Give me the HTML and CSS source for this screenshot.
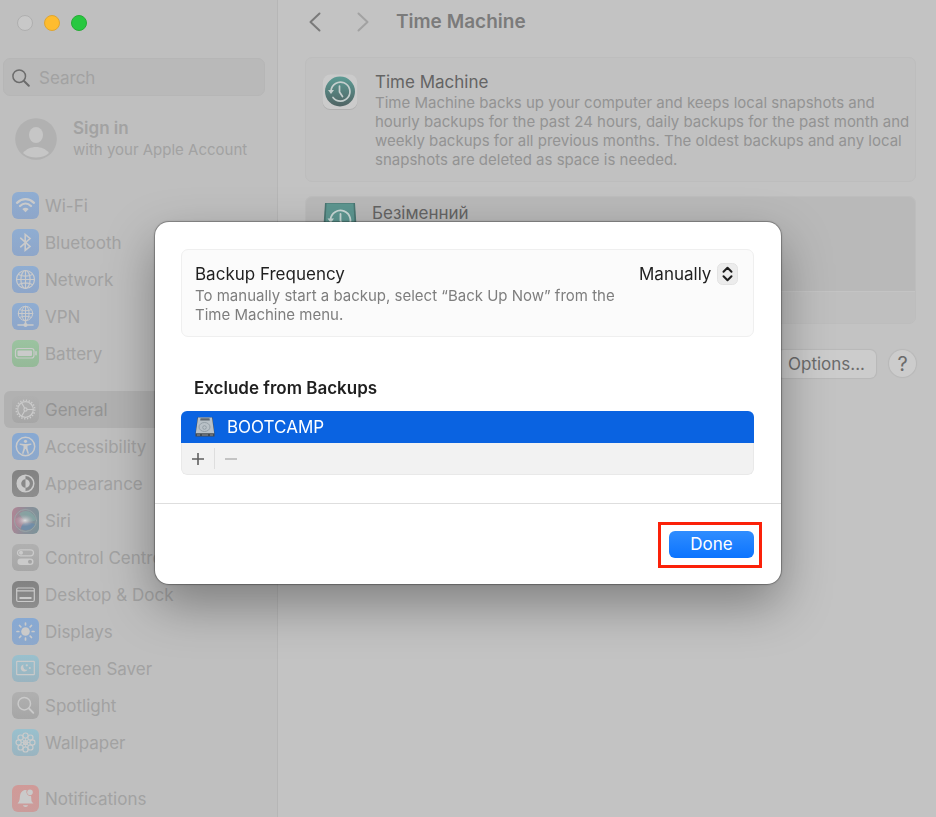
FILE: index.html
```html
<!DOCTYPE html>
<html lang="en">
<head>
  <meta charset="UTF-8" />
  <meta name="viewport" content="width=device-width, initial-scale=1.0">
  <title>Time Machine</title>
  <link rel="stylesheet" href="styles.css">
</head>
<body>
  <div class="window">
    <aside class="sidebar">
      <div class="lights">
        <button class="light" aria-label="Close"></button>
        <button class="light yellow" aria-label="Minimise"></button>
        <button class="light green" aria-label="Zoom"></button>
      </div>

      <label class="search">
        <svg width="18" height="18" viewBox="0 0 18 18" fill="none" stroke="#6c6c6c" stroke-width="1.5" stroke-linecap="round"><circle cx="7.2" cy="7.2" r="6.3"/><path d="M12 12l4.8 4.8" stroke-width="2"/></svg>
        <input type="search" placeholder="Search" aria-label="Search">
      </label>

      <a class="account" href="#">
        <svg width="42" height="42" viewBox="0 0 42 42">
          <circle cx="21" cy="21" r="20.8" fill="#b1b1b1"/>
          <ellipse cx="21" cy="17" rx="7" ry="8" fill="#c6c6c6"/>
          <path d="M8 35c3-4 8-6 13-6s10 2 13 6c-4 3.500-8 4.500-13 4.500S12 38.500 8 35z" fill="#c6c6c6"/>
        </svg>
        <span class="account-text">
          <span class="account-name">Sign in</span>
          <span class="account-sub">with your Apple Account</span>
        </span>
      </a>

      <nav>
        <div class="group">
          <a class="item" href="#">
            <svg class="icon blue" viewBox="0 0 27 27"><path d="M5 10.800c5-4.800 12-4.800 17 0M8 14c3.300-3.200 7.700-3.200 11 0" stroke-width="2.300"/><path class="fill" d="M10.300 17c2-1.700 4.400-1.700 6.400 0L13.500 20.200z"/></svg>
            Wi-Fi
          </a>
          <a class="item" href="#">
            <svg class="icon blue" viewBox="0 0 27 27"><path d="M8.700 9.200l9.300 8.200-4.800 4V5.500l4.800 4-9.300 8.300" stroke-width="1.600"/></svg>
            Bluetooth
          </a>
          <a class="item" href="#">
            <svg class="icon blue" viewBox="0 0 27 27"><circle cx="13.500" cy="13.500" r="9"/><ellipse cx="13.500" cy="13.500" rx="4.600" ry="9"/><path d="M13.500 4.500v18M4.500 13.500h18M6.500 8.500c4.500 2 9.500 2 14 0M6.500 18.500c4.500-2 9.500-2 14 0"/></svg>
            Network
          </a>
          <a class="item" href="#">
            <svg class="icon blue" viewBox="0 0 27 27"><g stroke-width="1"><circle cx="13.500" cy="10.500" r="7.200"/><ellipse cx="13.500" cy="10.500" rx="3.600" ry="7.200"/><path d="M13.500 3.300v14.400M6.300 10.500h14.400M7.800 6.700c3.800 1.500 7.600 1.500 11.400 0M7.800 14.300c3.800-1.500 7.600-1.500 11.400 0"/></g><path d="M13.500 18v4M6 22h15" stroke-width="1.500"/><circle class="fill" cx="13.500" cy="22" r="2"/></svg>
            VPN
          </a>
          <a class="item" href="#">
            <svg class="icon lime" viewBox="0 0 27 27"><rect x="3.500" y="8.500" width="18.500" height="9.500" rx="2.500"/><rect class="fill" x="5.500" y="10.500" width="14.500" height="5.500" rx="1"/><path d="M24 11.800v3" stroke-width="1.500"/></svg>
            Battery
          </a>
        </div>

        <div class="group">
          <a class="item active" href="#">
            <svg class="icon gray" viewBox="0 0 27 27"><circle cx="13.500" cy="13.500" r="7.800"/><circle cx="13.500" cy="13.500" r="9.200" stroke-width="1.700" stroke-dasharray="1.300 1.590" stroke-linecap="butt"/><circle cx="13.500" cy="13.500" r="1.600"/><path d="M15.200 13.500h6M12.600 12l-3-5.200M12.600 15l-3 5.200"/></svg>
            General
          </a>
          <a class="item" href="#">
            <svg class="icon azure" viewBox="0 0 27 27"><circle cx="13.500" cy="13.500" r="9.200" stroke-width="1.500"/><circle class="fill" cx="13.500" cy="8.300" r="1.600"/><path class="fill" d="M7.800 10.500l4 .6h3.400l4-.6.2 1.300-3.900.9v2.500l1.500 5.300-1.300.4-1.900-4.800h-.6l-1.900 4.800-1.300-.4 1.500-5.300v-2.500l-3.900-.9z"/></svg>
            Accessibility
          </a>
          <a class="item" href="#">
            <svg class="icon dark" viewBox="0 0 27 27"><circle cx="13.500" cy="13.500" r="8.300" stroke-width="1.500"/><path class="fill" d="M13.500 5.200a8.300 8.300 0 0 0 0 16.600v-4a4.300 4.300 0 0 1 0-8.600zM13.500 9.200a4.300 4.300 0 0 1 0 8.600z"/></svg>
            Appearance
          </a>
          <a class="item" href="#">
            <svg class="icon siri" viewBox="0 0 27 27">
              <defs><radialGradient id="siriGlow"><stop offset="0" stop-color="#dddddd"/><stop offset="1" stop-color="#b4a7b4" stop-opacity="0"/></radialGradient></defs>
              <circle cx="13.500" cy="13.500" r="11" stroke="#9aaaaa" stroke-width=".8"/>
              <path d="M7 7c5-6 15-3 17 6-4 2-9 2-12 0z" fill="#84aaa5" stroke="none" opacity=".7"/>
              <path d="M3 12c3-3 7-2 9 1l-3 8c-4-1-6-5-6-9z" fill="#b98c9c" stroke="none" opacity=".6"/>
              <path d="M9 22c0-5 4-8 14-5-2 5-8 8-14 5z" fill="#688cad" stroke="none" opacity=".7"/>
              <ellipse cx="13" cy="13.500" rx="9" ry="6" fill="url(#siriGlow)" stroke="none"/>
            </svg>
            Siri
          </a>
          <a class="item" href="#">
            <svg class="icon gray" viewBox="0 0 27 27"><rect x="5.500" y="5.800" width="16" height="6" rx="3"/><circle class="fill" cx="9" cy="8.800" r="2"/><rect class="fill" x="5.500" y="14.500" width="16" height="6.500" rx="3.200"/><circle cx="18" cy="17.700" r="2" fill="#a4a4a4" stroke="none"/></svg>
            Control Centre
          </a>
          <a class="item" href="#">
            <svg class="icon dark" viewBox="0 0 27 27"><rect x="4.700" y="7" width="17.600" height="13.500" rx="1.500"/><path d="M5 9.800h17"/><path class="fill" d="M7.500 16h12v2h-12z"/></svg>
            Desktop &amp; Dock
          </a>
          <a class="item" href="#">
            <svg class="icon azure" viewBox="0 0 27 27"><circle class="fill" cx="13.500" cy="13.500" r="4.300"/><path d="M13.500 5v1.800M13.500 20.200V22M5 13.500h1.800M20.200 13.500H22M7.500 7.500l1.300 1.300M18.200 18.200l1.300 1.300M19.500 7.500l-1.300 1.300M8.800 18.200l-1.300 1.300" stroke-width="1.700"/></svg>
            Displays
          </a>
          <a class="item" href="#">
            <svg class="icon cyan" viewBox="0 0 27 27"><rect x="4.700" y="6.300" width="17.600" height="13.400" rx=".5"/><path class="fill" d="M11.500 9.500a3.600 3.600 0 1 0 4 5.200c-3 .7-5-2-4-5.200z"/><circle class="fill" cx="14.800" cy="10.300" r="1.100"/><circle class="fill" cx="17.800" cy="13" r="1"/></svg>
            Screen Saver
          </a>
          <a class="item" href="#">
            <svg class="icon gray" viewBox="0 0 27 27"><circle cx="12.300" cy="11.700" r="6.200" stroke-width="1.500"/><path d="M17 16.500l4.300 4.300" stroke-width="1.900"/></svg>
            Spotlight
          </a>
          <a class="item" href="#">
            <svg class="icon cyan" viewBox="0 0 27 27"><circle cx="13.500" cy="13.500" r="2"/><g><circle cx="13.500" cy="6.600" r="2.600"/><circle cx="13.500" cy="20.400" r="2.600"/><circle cx="6.600" cy="13.500" r="2.600"/><circle cx="20.400" cy="13.500" r="2.600"/><circle cx="8.600" cy="8.600" r="2.600"/><circle cx="18.400" cy="8.600" r="2.600"/><circle cx="8.600" cy="18.400" r="2.600"/><circle cx="18.400" cy="18.400" r="2.600"/></g><path d="M13.500 9.500v8M9.500 13.500h8M10.700 10.700l5.600 5.600M16.300 10.700l-5.600 5.600" stroke-width=".8"/></svg>
            Wallpaper
          </a>
        </div>

        <div class="group">
          <a class="item" href="#">
            <svg class="icon red" viewBox="0 0 27 27"><path class="fill" d="M5.500 18.500c2.500-2.500 2-4.500 2.500-7.500.5-3.500 2.500-6 5.500-6 .5 0 .9.100 1.200.2a3.900 3.900 0 0 0 4.300 5.600c.8 4-.5 5 2.500 7.700z"/><circle class="fill" cx="18" cy="7.200" r="2.800"/><path class="fill" d="M11 20.300h5c-.3 2.300-4.700 2.300-5 0z"/></svg>
            Notifications
          </a>
        </div>
      </nav>
    </aside>

    <main class="content">
      <header class="toolbar">
        <button class="nav-btn" aria-label="Back"><svg width="12" height="20" viewBox="0 0 12 20"><path d="M10.500 1.500L1.500 10l9 8.500"/></svg></button>
        <button class="nav-btn forward" aria-label="Forward" disabled><svg width="12" height="20" viewBox="0 0 12 20"><path d="M1.500 1.500l9 8.500-9 8.500"/></svg></button>
        <h1>Time Machine</h1>
      </header>

      <section class="card intro">
        <svg class="app-icon" width="36" height="36" viewBox="0 0 36 36">
          <defs><linearGradient id="dial" x1="0" y1="0" x2="0" y2="1"><stop offset="0" stop-color="#5c9b94"/><stop offset="1" stop-color="#506464"/></linearGradient></defs>
          <rect x=".5" y="1" width="35" height="35" rx="8" fill="#b0b0b0"/>
          <rect x=".5" y=".5" width="35" height="34.500" rx="8" fill="#cbcbcb"/>
          <circle cx="18" cy="17.500" r="15" fill="url(#dial)"/>
          <g fill="none" stroke="#c5cfce" stroke-width="1.700" stroke-linecap="round"><path d="M9 16.500a9.500 9.500 0 1 1 2 7"/><path d="M17.500 12v6l3 4.500"/></g>
          <path d="M6 16h6l-3 4z" fill="#c5cfce"/>
        </svg>
        <div>
          <h2>Time Machine</h2>
          <p>Time Machine backs up your computer and keeps local snapshots and hourly backups for the past 24 hours, daily backups for the past month and weekly backups for all previous months. The oldest backups and any local snapshots are deleted as space is needed.</p>
        </div>
      </section>

      <section class="card disks">
        <div class="disk">
          <svg width="36" height="36" viewBox="0 0 36 36">
            <path d="M3 1h30l2 30v4H1v-4z" fill="#4a7672"/>
            <path d="M4.500 1.500h27L33 31H3z" fill="#5d9690"/>
            <g fill="none" stroke="#c9d8d6" stroke-width="1.800" stroke-linecap="round"><path d="M8.500 17.500a10 10 0 1 1 2 7"/><path d="M18.500 12v7l3 4"/></g>
            <path d="M5.500 16.500h6.500l-3.200 4.500z" fill="#c9d8d6"/>
          </svg>
          <span>Безіменний</span>
        </div>
        <div class="disks-foot"></div>
      </section>

      <div class="actions">
        <button class="btn">Options...</button>
        <button class="help" aria-label="Help">?</button>
      </div>
    </main>
  </div>

  <div class="overlay">
    <div class="dialog" role="dialog" aria-label="Options">
      <div class="dialog-body">
        <div class="frequency">
          <div class="frequency-row">
            <label for="frequency">Backup Frequency</label>
            <span class="picker">
              <select id="frequency">
                <option>Manually</option>
              </select>
              <svg width="21" height="22" viewBox="0 0 21 22"><rect x=".5" y=".5" width="20" height="21" rx="5" fill="#ececec" stroke="#e3e3e3"/><path d="M6.500 8.800l4-4 4 4M6.500 13.200l4 4 4-4" fill="none" stroke="#1c1c1c" stroke-width="2" stroke-linecap="round" stroke-linejoin="round"/></svg>
            </span>
          </div>
          <p>To manually start a backup, select “Back Up Now” from the Time Machine menu.</p>
        </div>

        <h3>Exclude from Backups</h3>
        <div class="exclude">
          <div class="exclude-row">
            <svg width="20" height="20" viewBox="0 0 20 20">
              <path d="M2.500.5h15L19.500 16v3.500H.5V16z" fill="#444b52"/>
              <path d="M3 .5h14l2.200 15.700H.8z" fill="#b9c1c7"/>
              <path d="M5.500 1.200h9l.3 2.300H5.200z" fill="#5f6870"/>
              <ellipse cx="9.500" cy="10" rx="5.500" ry="4.500" fill="none" stroke="#8c979e" stroke-width=".8"/>
              <circle cx="9.500" cy="10.500" r="1.800" fill="none" stroke="#8c979e" stroke-width=".8"/>
              <path d="M2 18h3M7 18h6M15 18h3" stroke="#8b9198" stroke-width="1"/>
            </svg>
            <span>BOOTCAMP</span>
          </div>
          <div class="exclude-tools">
            <button aria-label="Add"><svg width="12" height="12" viewBox="0 0 12 12"><path d="M6 0v12M0 6h12" stroke="#5f5f5f" stroke-width="1.600"/></svg></button>
            <button aria-label="Remove" disabled><svg width="12" height="12" viewBox="0 0 12 12"><path d="M0 6h12" stroke="#b4b4b4" stroke-width="1.600"/></svg></button>
          </div>
        </div>
      </div>

      <footer class="dialog-foot">
        <div class="highlight">
          <button class="done">Done</button>
        </div>
      </footer>
    </div>
  </div>
</body>
</html>
```
FILE: styles.css
```css
* {
  margin: 0;
  padding: 0;
  box-sizing: border-box;
}
body {
  font-family: Inter, "Liberation Sans", sans-serif;
  font-size: 17px;
  line-height: 22px;
  background: #c3c3c3;
  color: #646464;
}
button, input, select {
  font: inherit;
  color: inherit;
  border: 0;
  background: none;
}
a {
  color: inherit;
  text-decoration: none;
}
svg {
  display: block;
  flex-shrink: 0;
}
.window {
  display: flex;
  height: 100vh;
  overflow: hidden;
}

/* sidebar */
.sidebar {
  width: 278px;
  flex-shrink: 0;
  background: #bfbfbf;
  border-right: 1px solid #b6b6b6;
  color: #a2a2a2;
}
.lights {
  display: flex;
  gap: 11px;
  padding: 15px 17px 0;
}
.light {
  width: 16px;
  height: 16px;
  border-radius: 50%;
  background: #c8c8c8;
  border: 1px solid #afafaf;
}
.light.yellow {
  background: #febc2e;
  border-color: #e0a52f;
}
.light.green {
  background: #28c840;
  border-color: #26ac36;
}
.search {
  display: flex;
  align-items: center;
  gap: 9px;
  height: 38px;
  margin: 27px 12px 0 3px;
  padding: 1px 8px 0;
  border-radius: 7px;
  background: #b9b9b9;
  border: 1px solid #b6b6b6;
}
.search input {
  flex: 1;
  min-width: 0;
  outline: none;
}
.search input::placeholder {
  color: #a2a2a2;
}
.account {
  display: flex;
  align-items: center;
  gap: 16px;
  margin: 21px 0 0 15px;
}
.account-text {
  display: flex;
  flex-direction: column;
}
.account-name {
  font-weight: 600;
}
.account-sub {
  font-size: 15px;
}
nav {
  padding: 26px 12px 0 4px;
}
.group {
  margin-bottom: 19px;
}
.item {
  display: flex;
  align-items: center;
  gap: 6px;
  height: 37px;
  padding-left: 8px;
  border-radius: 6px;
}
.item.active {
  background: #b1b1b1;
  color: #949494;
}
.icon {
  width: 27px;
  height: 27px;
  border-radius: 6px;
  fill: none;
  stroke: #cacaca;
  stroke-width: 1.2;
  stroke-linecap: round;
}
.icon .fill {
  fill: #cacaca;
  stroke: none;
}
.blue {
  background: linear-gradient(#8fadd2, #8ea6c9);
}
.azure {
  background: linear-gradient(#87a9d3, #8da8cb);
}
.lime {
  background: linear-gradient(#9bc3a0, #95b998);
}
.gray {
  background: linear-gradient(#b0b0b0, #a6a6a6);
}
.dark {
  background: linear-gradient(#828282, #8d8d8d);
}
.cyan {
  background: linear-gradient(#99c0cd, #9ab4c0);
}
.red {
  background: linear-gradient(#d09a98, #cb9c9b);
}
.siri {
  background: linear-gradient(100deg, #b28494, #8b8f99 50%, #7b9399);
}

/* settings pane */
.content {
  flex: 1;
  min-width: 0;
  padding: 11px 20px 0 27px;
}
.toolbar {
  display: flex;
  align-items: center;
  padding-left: 4px;
}
.nav-btn {
  width: 12px;
  height: 22px;
  margin-right: 36px;
}
.nav-btn svg {
  fill: none;
  stroke: #7a7a7a;
  stroke-width: 2;
  stroke-linecap: round;
  stroke-linejoin: round;
}
.nav-btn.forward {
  margin-right: 27px;
}
.nav-btn.forward svg {
  stroke: #a2a2a2;
}
.toolbar h1 {
  font-size: 19px;
  line-height: 22px;
  font-weight: 600;
  color: #7b7b7b;
}
.card {
  border: 1px solid #bdbdbd;
  border-radius: 7px;
  background: #c1c1c1;
}
.intro {
  display: flex;
  gap: 17px;
  min-height: 125px;
  margin-top: 24px;
  padding: 13px 0 11px 16px;
}
.app-icon {
  margin-top: 3px;
}
.intro h2 {
  font-size: 17px;
  font-weight: 400;
}
.intro p {
  font-size: 15px;
  line-height: 19px;
  color: #939393;
}
.disks {
  margin-top: 14px;
  overflow: hidden;
}
.disk {
  display: flex;
  gap: 14px;
  height: 95px;
  padding: 5px 16px;
  background: #b9b9b9;
  border-bottom: 1px solid #c4c4c4;
}
.disks-foot {
  height: 31px;
  background: #bfbfbf;
}
.actions {
  display: flex;
  justify-content: flex-end;
  gap: 13px;
  margin-top: 26px;
}
.btn {
  height: 28px;
  padding: 0 11px;
  border-radius: 6px;
  background: #cccccc;
  color: #6b6b6b;
  box-shadow: 0 0 1px 1px rgba(0, 0, 0, 0.06);
}
.help {
  width: 27px;
  height: 27px;
  border-radius: 50%;
  background: #cccccc;
  font-size: 20px;
  color: #6b6b6b;
  box-shadow: 0 0 1px 1px rgba(0, 0, 0, 0.06);
}

/* dialog */
.overlay {
  position: fixed;
  inset: 0;
  display: flex;
  align-items: center;
  padding: 0 155px 11px;
}
.dialog {
  flex: 1;
  background: #ffffff;
  border-radius: 14px;
  box-shadow: 0 0 0 1px rgba(0, 0, 0, 0.2), 0 0 3px rgba(0, 0, 0, 0.3), 0 20px 50px rgba(0, 0, 0, 0.35);
  color: #1f1f1f;
}
.dialog-body {
  padding: 27px 27px 28px 26px;
}
.frequency {
  padding: 13px 15px 12px 13px;
  border: 1px solid #efefef;
  border-radius: 7px;
  background: #fbfbfb;
}
.frequency-row {
  display: flex;
  justify-content: space-between;
}
.frequency p {
  max-width: 440px;
  margin-top: 1px;
  font-size: 15px;
  line-height: 19px;
  color: #7e7e7e;
}
.picker {
  display: flex;
  align-items: center;
  gap: 5px;
}
.picker select {
  appearance: none;
  outline: none;
}
.dialog h3 {
  margin: 40px 0 12px 13px;
  font-size: 17px;
  font-weight: 600;
}
.exclude {
  border-radius: 6px;
  overflow: hidden;
}
.exclude-row {
  display: flex;
  align-items: center;
  gap: 12px;
  height: 32px;
  padding-left: 14px;
  background: #0a63e1;
  color: #ffffff;
}
.exclude-tools {
  display: flex;
  align-items: center;
  height: 32px;
  background: #f2f2f2;
  border: 1px solid #e9e9e9;
  border-top: 0;
  border-radius: 0 0 6px 6px;
}
.exclude-tools button {
  display: flex;
  align-items: center;
  justify-content: center;
  width: 32px;
  height: 21px;
}
.exclude-tools button + button {
  border-left: 1px solid #dedede;
}
.dialog-foot {
  display: flex;
  justify-content: flex-end;
  padding: 18px 19px 16px;
  border-top: 1px solid #dedede;
}
.highlight {
  padding: 6px 5px 7px 8px;
  border: 3px solid #fb2109;
}
.done {
  display: block;
  width: 85px;
  height: 27px;
  padding-bottom: 2px;
  border-radius: 6px;
  background: linear-gradient(#2f8dff, #0c74ff);
  color: #ffffff;
}
```
